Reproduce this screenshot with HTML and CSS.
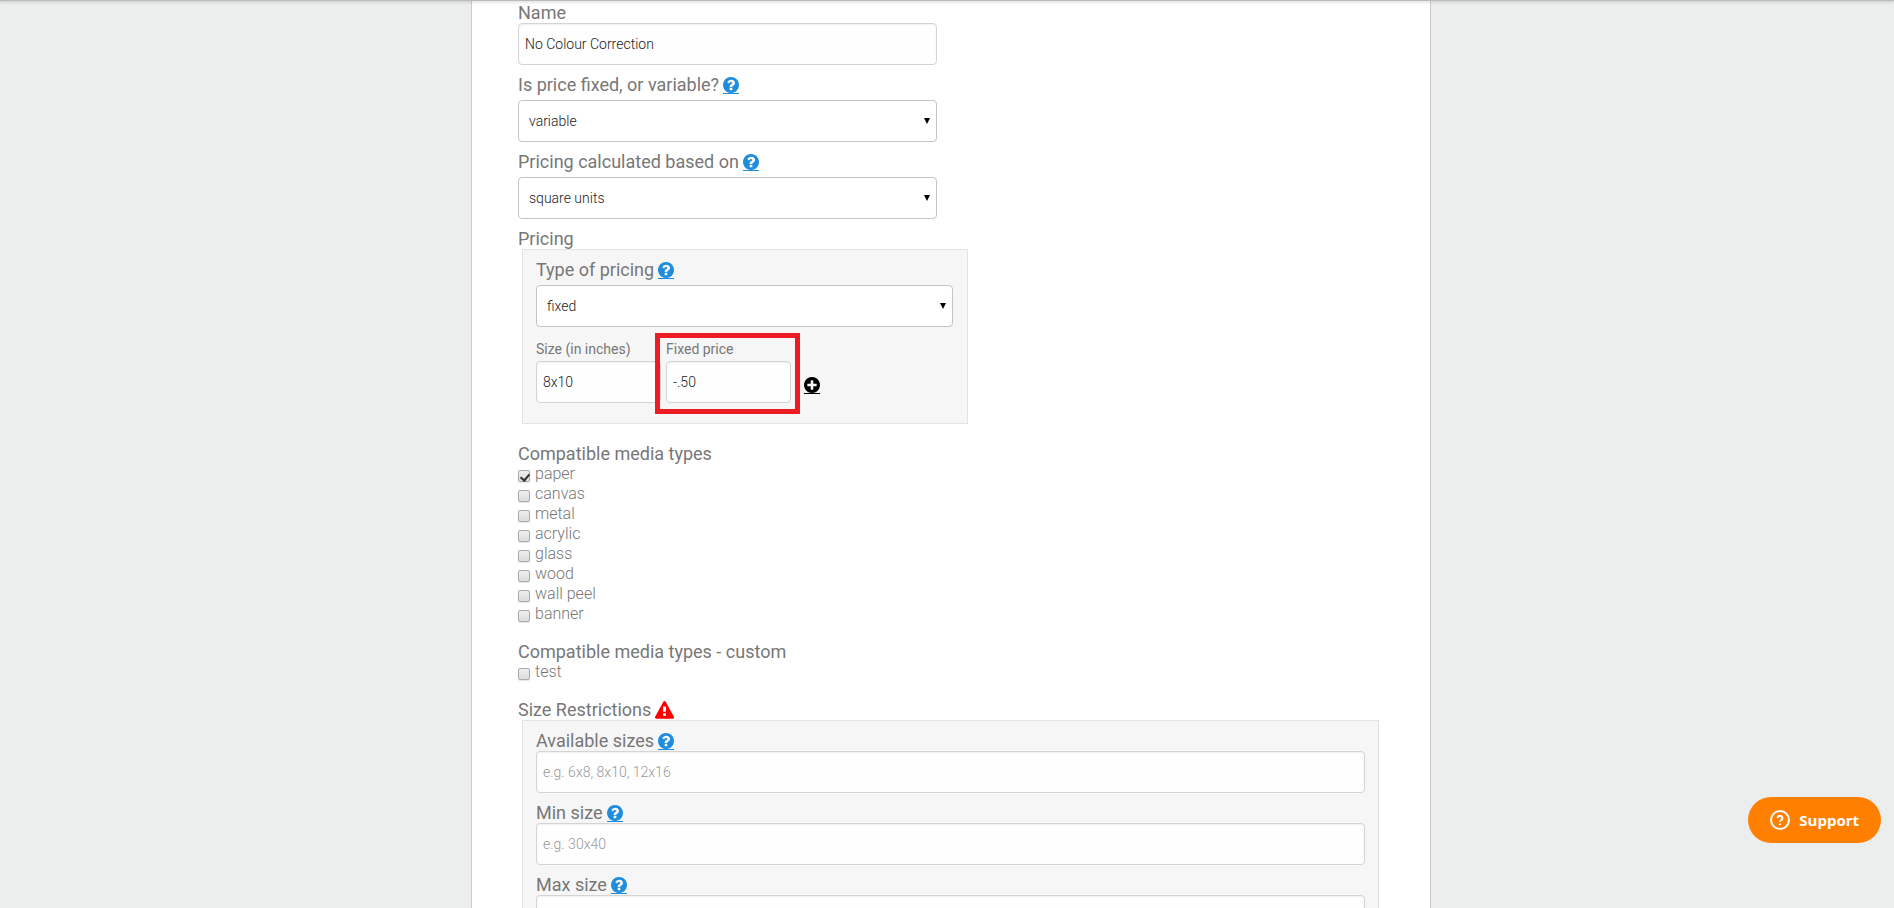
FILE: index.html
```html
<!DOCTYPE html>
<html lang="en">
  <head>
    <meta charset="UTF-8" />
    <meta name="viewport" content="width=device-width, initial-scale=1" />
    <title>Edit option</title>
    <link rel="stylesheet" href="styles.css">
  </head>
  <body>
    <!-- shared icons -->
    <svg class="sprite" aria-hidden="true">
      <symbol id="icon-help" viewBox="128 128 1536 1536">
        <path d="M1024 1376v-192q0-14-9-23t-23-9h-192q-14 0-23 9t-9 23v192q0 14 9 23t23 9h192q14 0 23-9t9-23zm256-672q0-88-55.5-163t-138.5-116-170-41q-243 0-371 213-15 24 8 42l132 100q7 6 19 6 16 0 25-12 53-68 86-92 34-24 86-24 48 0 85.5 26t37.5 59q0 38-20 61t-68 45q-63 28-115.5 86.5t-52.5 125.5v36q0 14 9 23t23 9h192q14 0 23-9t9-23q0-19 21.5-49.5t54.5-49.5q32-18 49-28.5t46-35 44.5-48 28-60.5 12.5-81zm384 192q0 209-103 385.5t-279.5 279.5-385.5 103-385.5-103-279.5-279.5-103-385.5 103-385.5 279.5-279.5 385.5-103 385.5 103 279.5 279.5 103 385.5z" />
      </symbol>
      <symbol id="icon-plus" viewBox="128 128 1536 1536">
        <path d="M1344 960v-128q0-26-19-45t-45-19h-256v-256q0-26-19-45t-45-19h-128q-26 0-45 19t-19 45v256h-256q-26 0-45 19t-19 45v128q0 26 19 45t45 19h256v256q0 26 19 45t45 19h128q26 0 45-19t19-45v-256h256q26 0 45-19t19-45zm320-64q0 209-103 385.5t-279.5 279.5-385.5 103-385.5-103-279.5-279.5-103-385.5 103-385.5 279.5-279.5 385.5-103 385.5 103 279.5 279.5 103 385.5z" />
      </symbol>
      <symbol id="icon-warning" viewBox="0 0 1792 1792">
        <path d="M1024 1375v-190q0-14-9.5-23.5t-22.5-9.5h-192q-13 0-22.5 9.5t-9.5 23.5v190q0 14 9.5 23.5t22.5 9.5h192q13 0 22.5-9.5t9.5-23.5zm-2-374l18-459q0-12-10-19-13-11-24-11h-220q-11 0-24 11-10 7-10 21l17 457q0 10 10 16.5t24 6.5h185q14 0 23.5-6.5t10.5-16.5zm-14-934l768 1408q35 63-2 126-17 29-46.5 46t-63.5 17h-1536q-34 0-63.5-17t-46.5-46q-37-63-2-126l768-1408q17-31 47-49t65-18 65 18 47 49z" />
      </symbol>
    </svg>

    <div class="topbar"></div>

    <main class="page">
      <form class="option-form" autocomplete="off">
        <div class="field narrow">
          <div class="label-row"><label for="name">Name</label></div>
          <input type="text" id="name" value="No Colour Correction" />
        </div>
        <div class="field narrow">
          <div class="label-row">
            <label for="price-mode">Is price fixed, or variable?</label>
            <a class="help" href="#" aria-label="Help"><svg><use href="#icon-help" /></svg></a>
          </div>
          <div class="select">
            <select id="price-mode">
              <option>fixed</option>
              <option selected>variable</option>
            </select>
          </div>
        </div>
        <div class="field narrow">
          <div class="label-row">
            <label for="based-on">Pricing calculated based on</label>
            <a class="help" href="#" aria-label="Help"><svg><use href="#icon-help" /></svg></a>
          </div>
          <div class="select">
            <select id="based-on">
              <option>square units</option>
            </select>
          </div>
        </div>

        <div class="label-row">Pricing</div>
        <div class="panel pricing">
          <div class="field">
            <div class="label-row">
              <label for="pricing-type">Type of pricing</label>
              <a class="help" href="#" aria-label="Help"><svg><use href="#icon-help" /></svg></a>
            </div>
            <div class="select">
              <select id="pricing-type">
                <option>fixed</option>
              </select>
            </div>
          </div>
          <div class="price-row">
            <div class="price-cell">
              <label for="size">Size (in inches)</label>
              <input type="text" id="size" value="8x10" />
            </div>
            <div class="price-cell highlight">
              <label for="fixed-price">Fixed price</label>
              <input type="text" id="fixed-price" value="-.50" />
            </div>
            <a class="help add" href="#" aria-label="Add size"><svg><use href="#icon-plus" /></svg></a>
          </div>
        </div>

        <fieldset class="group">
          <legend>Compatible media types</legend>
          <label class="check"><input type="checkbox" checked />paper</label>
          <label class="check"><input type="checkbox" />canvas</label>
          <label class="check"><input type="checkbox" />metal</label>
          <label class="check"><input type="checkbox" />acrylic</label>
          <label class="check"><input type="checkbox" />glass</label>
          <label class="check"><input type="checkbox" />wood</label>
          <label class="check"><input type="checkbox" />wall peel</label>
          <label class="check"><input type="checkbox" />banner</label>
        </fieldset>

        <fieldset class="group">
          <legend>Compatible media types - custom</legend>
          <label class="check"><input type="checkbox" />test</label>
        </fieldset>

        <div class="label-row">
          Size Restrictions
          <svg class="warning"><use href="#icon-warning" /></svg>
        </div>
        <div class="panel">
          <div class="field">
            <div class="label-row">
              <label for="sizes">Available sizes</label>
              <a class="help" href="#" aria-label="Help"><svg><use href="#icon-help" /></svg></a>
            </div>
            <input type="text" id="sizes" placeholder="e.g. 6x8, 8x10, 12x16" />
          </div>
          <div class="field">
            <div class="label-row">
              <label for="min-size">Min size</label>
              <a class="help" href="#" aria-label="Help"><svg><use href="#icon-help" /></svg></a>
            </div>
            <input type="text" id="min-size" placeholder="e.g. 30x40" />
          </div>
          <div class="field">
            <div class="label-row">
              <label for="max-size">Max size</label>
              <a class="help" href="#" aria-label="Help"><svg><use href="#icon-help" /></svg></a>
            </div>
            <input type="text" id="max-size" />
          </div>
        </div>
      </form>
    </main>

    <button type="button" class="support">
      <svg viewBox="0 0 20 20">
        <circle cx="10" cy="10" r="9" />
        <path d="M7.6 8.1a2.4 2.2 0 1 1 3.6 1.9q-1.2.7-1.2 1.8" />
        <path d="M10 13.4v1.7" />
      </svg>
      Support
    </button>
  </body>
</html>
```

FILE: styles.css
```css
:root {
  --bg: #ebeeed;
  --text: #777;
  --link: #1e8ddd;
  --border: #ccc;
  --orange: #ff7f00;
}
* {
  box-sizing: border-box;
}
body {
  margin: 0;
  padding-left: 8px;
  height: 100vh;
  overflow: hidden;
  background: var(--bg);
  color: var(--text);
  font-family: Roboto, Arial, sans-serif;
}
.sprite {
  display: none;
}
.topbar {
  position: fixed;
  top: 0;
  left: 0;
  right: 0;
  height: 1px;
  background: #bbb;
  box-shadow: 0 1px 3px rgba(0, 0, 0, 0.3);
  z-index: 5;
}
.page {
  max-width: 960px;
  min-height: 100vh;
  margin: 0 auto;
  padding: 1px 51px 40px 46px;
  background: #fff;
  border-left: 1px solid var(--border);
  border-right: 1px solid var(--border);
}
.field {
  margin-bottom: 8px;
}
.narrow {
  max-width: 419px;
}
.label-row {
  display: flex;
  align-items: center;
  gap: 4px;
  padding-top: 2px;
  font-size: 18px;
  line-height: 20px;
}
.help {
  display: flex;
  height: 17px;
  color: var(--link);
  border-bottom: 1px solid;
}
.help svg {
  width: 16px;
  height: 16px;
  fill: currentColor;
}
.warning {
  width: 19px;
  height: 19px;
  fill: #f00;
}
input[type="text"],
select {
  display: block;
  width: 100%;
  height: 42px;
  padding: 0 6px;
  border: 1px solid #d4d4d4;
  border-radius: 4px;
  background: #fefefe;
  color: #222;
  font-family: inherit;
  font-size: 14px;
  font-weight: 300;
  box-shadow: inset 0 1px 2px rgba(0, 0, 0, 0.06);
}
input::placeholder {
  color: #999;
}
.select {
  position: relative;
  margin-top: 5px;
}
select {
  appearance: none;
  padding: 0 10px;
  border-color: #c4c4c4;
  background: #fff;
  box-shadow: none;
}
.select::after {
  content: "";
  position: absolute;
  right: 7px;
  top: 18px;
  border: 3px solid transparent;
  border-top: 6px solid #000;
  border-bottom: 0;
  pointer-events: none;
}
.panel {
  margin-left: 4px;
  padding: 8px 13px;
  background: #f6f6f6;
  border: 1px solid #e3e3e3;
}
.pricing {
  max-width: 446px;
  margin-bottom: 18px;
  padding-right: 14px;
  padding-bottom: 20px;
}
.price-row {
  display: flex;
  align-items: flex-end;
  gap: 5px;
  margin-top: 13px;
}
.price-cell {
  position: relative;
  width: 125px;
}
.price-cell label {
  display: block;
  margin-bottom: 3px;
  font-size: 14px;
  line-height: 18px;
}
.highlight::after {
  content: "";
  position: absolute;
  inset: -7px -9px -11px -11px;
  border: 5px solid #ed1c24;
  pointer-events: none;
}
.add {
  margin: 0 0 9px 8px;
  color: #000;
}
.group {
  margin: 0 0 16px;
  padding: 0;
  border: 0;
}
.group legend {
  padding: 2px 0 0;
  font-size: 18px;
  line-height: 20px;
}
.check {
  display: flex;
  align-items: center;
  gap: 5px;
  width: fit-content;
  font-size: 16px;
  font-weight: 300;
  line-height: 20px;
}
.check input {
  appearance: none;
  position: relative;
  width: 12px;
  height: 12px;
  margin: 3px 0 0;
  border: 1px solid #aaa;
  border-radius: 2px;
  background: linear-gradient(#eee, #dcdcdc);
  box-shadow: 0 1px 1px rgba(0, 0, 0, 0.1);
}
.check input:checked::after {
  content: "";
  position: absolute;
  left: 3px;
  top: 1px;
  width: 4px;
  height: 7px;
  border: solid #333;
  border-width: 0 2px 2px 0;
  transform: rotate(40deg);
}
.support {
  position: fixed;
  right: 13px;
  bottom: 65px;
  display: flex;
  align-items: center;
  gap: 9px;
  height: 46px;
  padding: 0 22px;
  border: 0;
  border-radius: 23px;
  background: var(--orange);
  color: #fff;
  font-family: "Open Sans", sans-serif;
  font-size: 15px;
  font-weight: 700;
  cursor: pointer;
}
.support svg {
  width: 20px;
  height: 20px;
  fill: none;
  stroke: #fff;
  stroke-width: 2;
}
@media (max-width: 600px) {
  .page {
    padding-left: 16px;
    padding-right: 16px;
  }
}
```
